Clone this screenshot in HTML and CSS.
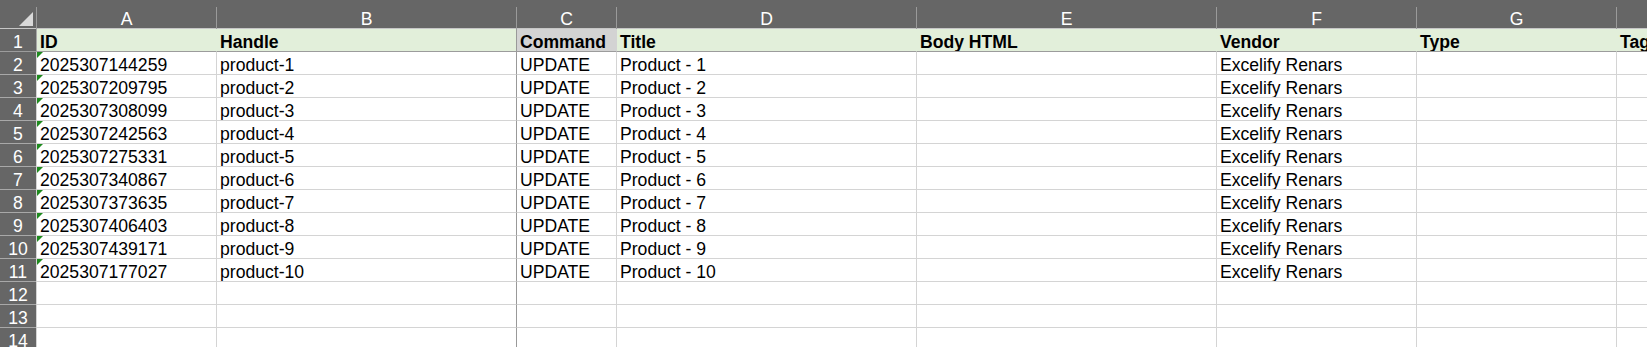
FILE: index.html
```html
<!DOCTYPE html>
<html lang="en">
<head>
    <meta charset="UTF-8">
    <meta name="viewport" content="width=device-width, initial-scale=1.0">
    <title>products.xlsx</title>
    <link rel="stylesheet" href="styles.css">
</head>
<body>
    <div class="sheet">
        <div class="top-strip"></div>

        <div class="row col-heads">
            <div class="corner">
                <svg width="36" height="22" viewBox="0 0 36 22"><polygon points="33,5 33,19 19,19" fill="#d9d9d9"/></svg>
            </div>
            <div class="head">A</div>
            <div class="head">B</div>
            <div class="head">C</div>
            <div class="head">D</div>
            <div class="head">E</div>
            <div class="head">F</div>
            <div class="head">G</div>
            <div class="head">H</div>
        </div>

        <div class="row titles">
            <div class="num">1</div>
            <div class="cell">ID</div>
            <div class="cell">Handle</div>
            <div class="cell frozen command">Command</div>
            <div class="cell">Title</div>
            <div class="cell">Body HTML</div>
            <div class="cell">Vendor</div>
            <div class="cell">Type</div>
            <div class="cell">Tags</div>
        </div>

        <div class="row">
            <div class="num">2</div>
            <div class="cell flag">2025307144259</div>
            <div class="cell">product-1</div>
            <div class="cell frozen">UPDATE</div>
            <div class="cell">Product - 1</div>
            <div class="cell"></div>
            <div class="cell">Excelify Renars</div>
            <div class="cell"></div>
            <div class="cell"></div>
        </div>
        <div class="row">
            <div class="num">3</div>
            <div class="cell flag">2025307209795</div>
            <div class="cell">product-2</div>
            <div class="cell frozen">UPDATE</div>
            <div class="cell">Product - 2</div>
            <div class="cell"></div>
            <div class="cell">Excelify Renars</div>
            <div class="cell"></div>
            <div class="cell"></div>
        </div>
        <div class="row">
            <div class="num">4</div>
            <div class="cell flag">2025307308099</div>
            <div class="cell">product-3</div>
            <div class="cell frozen">UPDATE</div>
            <div class="cell">Product - 3</div>
            <div class="cell"></div>
            <div class="cell">Excelify Renars</div>
            <div class="cell"></div>
            <div class="cell"></div>
        </div>
        <div class="row">
            <div class="num">5</div>
            <div class="cell flag">2025307242563</div>
            <div class="cell">product-4</div>
            <div class="cell frozen">UPDATE</div>
            <div class="cell">Product - 4</div>
            <div class="cell"></div>
            <div class="cell">Excelify Renars</div>
            <div class="cell"></div>
            <div class="cell"></div>
        </div>
        <div class="row">
            <div class="num">6</div>
            <div class="cell flag">2025307275331</div>
            <div class="cell">product-5</div>
            <div class="cell frozen">UPDATE</div>
            <div class="cell">Product - 5</div>
            <div class="cell"></div>
            <div class="cell">Excelify Renars</div>
            <div class="cell"></div>
            <div class="cell"></div>
        </div>
        <div class="row">
            <div class="num">7</div>
            <div class="cell flag">2025307340867</div>
            <div class="cell">product-6</div>
            <div class="cell frozen">UPDATE</div>
            <div class="cell">Product - 6</div>
            <div class="cell"></div>
            <div class="cell">Excelify Renars</div>
            <div class="cell"></div>
            <div class="cell"></div>
        </div>
        <div class="row">
            <div class="num">8</div>
            <div class="cell flag">2025307373635</div>
            <div class="cell">product-7</div>
            <div class="cell frozen">UPDATE</div>
            <div class="cell">Product - 7</div>
            <div class="cell"></div>
            <div class="cell">Excelify Renars</div>
            <div class="cell"></div>
            <div class="cell"></div>
        </div>
        <div class="row">
            <div class="num">9</div>
            <div class="cell flag">2025307406403</div>
            <div class="cell">product-8</div>
            <div class="cell frozen">UPDATE</div>
            <div class="cell">Product - 8</div>
            <div class="cell"></div>
            <div class="cell">Excelify Renars</div>
            <div class="cell"></div>
            <div class="cell"></div>
        </div>
        <div class="row">
            <div class="num">10</div>
            <div class="cell flag">2025307439171</div>
            <div class="cell">product-9</div>
            <div class="cell frozen">UPDATE</div>
            <div class="cell">Product - 9</div>
            <div class="cell"></div>
            <div class="cell">Excelify Renars</div>
            <div class="cell"></div>
            <div class="cell"></div>
        </div>
        <div class="row">
            <div class="num">11</div>
            <div class="cell flag">2025307177027</div>
            <div class="cell">product-10</div>
            <div class="cell frozen">UPDATE</div>
            <div class="cell">Product - 10</div>
            <div class="cell"></div>
            <div class="cell">Excelify Renars</div>
            <div class="cell"></div>
            <div class="cell"></div>
        </div>

        <div class="row">
            <div class="num">12</div>
            <div class="cell"></div>
            <div class="cell"></div>
            <div class="cell frozen"></div>
            <div class="cell"></div>
            <div class="cell"></div>
            <div class="cell"></div>
            <div class="cell"></div>
            <div class="cell"></div>
        </div>
        <div class="row">
            <div class="num">13</div>
            <div class="cell"></div>
            <div class="cell"></div>
            <div class="cell frozen"></div>
            <div class="cell"></div>
            <div class="cell"></div>
            <div class="cell"></div>
            <div class="cell"></div>
            <div class="cell"></div>
        </div>
        <div class="row">
            <div class="num">14</div>
            <div class="cell"></div>
            <div class="cell"></div>
            <div class="cell frozen"></div>
            <div class="cell"></div>
            <div class="cell"></div>
            <div class="cell"></div>
            <div class="cell"></div>
            <div class="cell"></div>
        </div>
    </div>
</body>
</html>
```

FILE: styles.css
```css
* {
    margin: 0;
    padding: 0;
    box-sizing: border-box;
}

body {
    background: #ffffff;
    font-family: 'Liberation Sans', Arial, sans-serif;
    font-size: 17.6px;
    color: #000000;
    overflow: hidden;
}

.sheet {
    width: 1647px;
    height: 347px;
    overflow: hidden;
}

.top-strip {
    height: 7px;
    background: #666666;
}

.row {
    display: grid;
    grid-template-columns: 36px 180px 300px 100px 300px 300px 200px 200px 200px;
    height: 23px;
}

/* column letters */
.col-heads {
    height: 22px;
    background: #666666;
    border-bottom: 1px solid #c6c6c6;
}

.corner {
    height: 22px;
}

.corner svg {
    display: block;
}

.head {
    color: #ffffff;
    text-align: center;
    line-height: 22px;
    padding-top: 1px;
    border-left: 1px solid #9a9a9a;
}

/* row numbers */
.num {
    background: #666666;
    color: #ffffff;
    text-align: center;
    padding-top: 3px;
    line-height: 20px;
    border-bottom: 1px solid #a8a8a8;
    overflow: hidden;
}

.cell {
    height: 23px;
    padding: 3px 0 0 3px;
    line-height: 20px;
    white-space: nowrap;
    overflow: hidden;
    border-left: 1px solid #d4d4d4;
    border-bottom: 1px solid #d4d4d4;
    position: relative;
}

.cell.frozen {
    border-left-color: #999999;
}

/* header row of the data */
.titles .cell {
    background: #e2efda;
    font-weight: bold;
    border-left-color: #e2efda;
    border-bottom-color: #9c9c9c;
}

.titles .cell:nth-child(2) {
    border-left-color: #a8a8a8;
}

.titles .cell.command {
    background: #d3d3d3;
    border-left-color: #999999;
}

.titles .cell.command + .cell {
    border-left-color: #d3d3d3;
}

.titles .num {
    border-bottom-color: #9c9c9c;
}

/* number stored as text marker */
.flag::before {
    content: "";
    position: absolute;
    left: 0;
    top: 0;
    border-top: 6px solid #1e8a1e;
    border-right: 6px solid transparent;
}
```
